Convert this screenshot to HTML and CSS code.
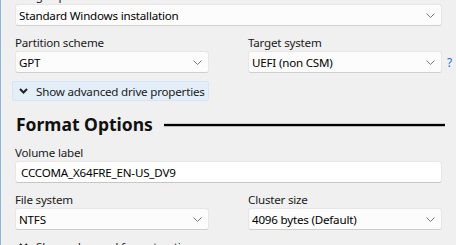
FILE: index.html
```html
<!DOCTYPE html>
<html>
<head>
<meta charset="utf-8">
<link rel="stylesheet" href="styles.css">
</head>
<body>
<div class="win">
  <div class="field first">
    <div class="label">Image option</div>
    <div class="combo"><span>Standard Windows installation</span><svg class="chev" width="9" height="5" viewBox="0 0 9 5"><polyline points="0.5,0.5 4.5,4.5 8.5,0.5" fill="none" stroke="#777" stroke-width="1"/></svg></div>
  </div>
  <div class="row">
    <div class="field">
      <div class="label">Partition scheme</div>
      <div class="combo"><span>GPT</span><svg class="chev" width="9" height="5" viewBox="0 0 9 5"><polyline points="0.5,0.5 4.5,4.5 8.5,0.5" fill="none" stroke="#777" stroke-width="1"/></svg></div>
    </div>
    <div class="field">
      <div class="label">Target system</div>
      <div class="combo"><span>UEFI (non CSM)</span><svg class="chev" width="9" height="5" viewBox="0 0 9 5"><polyline points="0.5,0.5 4.5,4.5 8.5,0.5" fill="none" stroke="#777" stroke-width="1"/></svg><span class="help">?</span></div>
    </div>
  </div>
  <div class="toggle"><svg width="9" height="6" viewBox="0 0 9 6"><polyline points="1,1 4.5,4.5 8,1" fill="none" stroke="#222" stroke-width="2"/></svg><span>Show advanced drive properties</span></div>
  <div class="heading"><span>Format Options</span><div class="rule"></div></div>
  <div class="field">
    <div class="label">Volume label</div>
    <div class="input">CCCOMA_X64FRE_EN-US_DV9</div>
  </div>
  <div class="row">
    <div class="field">
      <div class="label">File system</div>
      <div class="combo"><span>NTFS</span><svg class="chev" width="9" height="5" viewBox="0 0 9 5"><polyline points="0.5,0.5 4.5,4.5 8.5,0.5" fill="none" stroke="#777" stroke-width="1"/></svg></div>
    </div>
    <div class="field">
      <div class="label">Cluster size</div>
      <div class="combo"><span>4096 bytes (Default)</span><svg class="chev" width="9" height="5" viewBox="0 0 9 5"><polyline points="0.5,0.5 4.5,4.5 8.5,0.5" fill="none" stroke="#777" stroke-width="1"/></svg></div>
    </div>
  </div>
  <div class="toggle plain"><svg width="9" height="6" viewBox="0 0 9 6"><polyline points="1,1 4.5,4.5 8,1" fill="none" stroke="#222" stroke-width="2"/></svg><span>Show advanced format options</span></div>
</div>
</body>
</html>
```
FILE: styles.css
```css
html, body {
  margin: 0;
  padding: 0;
  background: #f0f0f0;
  overflow: hidden;
}
body {
  width: 456px;
  height: 245px;
  border-left: 1px solid #8fb4dc;
  box-sizing: border-box;
  font-family: "Noto Sans", "Open Sans", sans-serif;
  font-size: 11.6px;
  letter-spacing: -0.2px;
  color: #1a1a1a;
  white-space: nowrap;
}
.win {
  width: 427px;
  margin-left: 14px;
  margin-top: -12px;
  display: flex;
  flex-direction: column;
}
.field {
  display: flex;
  flex-direction: column;
}
.label {
  height: 16px;
  line-height: 16px;
}
.row {
  display: flex;
  gap: 39px;
  margin-top: 9px;
}
.row .field {
  width: 194px;
}
.combo, .input {
  position: relative;
  height: 22px;
  box-sizing: border-box;
  background: #fcfcfc;
  border: 1px solid #e6e6e6;
  border-bottom-color: #cfcfcf;
  border-radius: 3px;
  display: flex;
  align-items: center;
  padding-left: 3px;
  color: #000;
}
.combo .chev {
  position: absolute;
  right: 6px;
  top: 8px;
}
.input {
  padding-left: 5px;
  background: #fff;
  border-bottom-color: #c6c6c6;
}
.help {
  position: absolute;
  left: 198px;
  top: 2px;
  color: #1a73d6;
  font-size: 12px;
}
.toggle {
  margin-top: 8px;
  margin-left: -3px;
  width: 197px;
  height: 20px;
  box-sizing: border-box;
  background: #e3eef9;
  border: 1px solid #d3e5f6;
  border-radius: 2px;
  display: flex;
  align-items: center;
  gap: 8px;
  padding-left: 6px;
}
.toggle.plain {
  background: transparent;
  border-color: transparent;
  margin-top: 6px;
}
.heading {
  display: flex;
  align-items: center;
  height: 24px;
  margin-top: 11px;
  margin-bottom: 9px;
  font-size: 17.5px;
  letter-spacing: 0;
  font-weight: bold;
  color: #111;
}
.heading span {
  margin-left: 1px;
}
.rule {
  flex: 1;
  margin-left: 11px;
  margin-right: -3px;
  height: 2px;
  background: #000;
  box-shadow: 0 1px 0 #bbb, 0 -1px 0 #ccc;
  margin-top: 2px;
}
```
